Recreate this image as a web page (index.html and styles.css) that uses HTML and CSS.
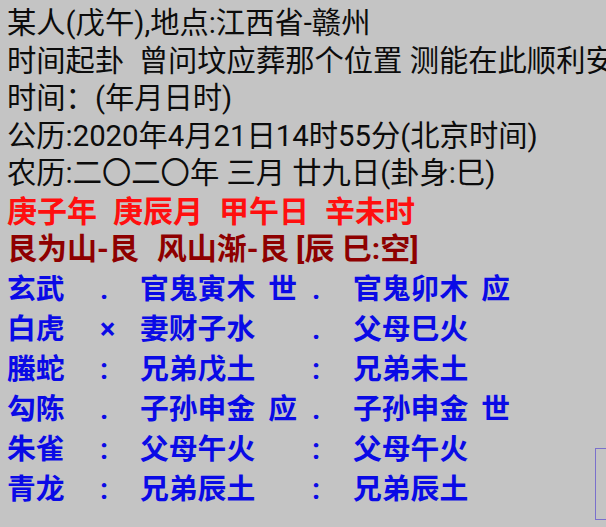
FILE: index.html
```html
<!DOCTYPE html>
<html lang="zh-CN">
<head>
<meta charset="utf-8">
<link rel="stylesheet" href="styles.css">
</head>
<body>
<div class="screen">
  <div class="info">
    <div class="line">某人(戊午),地点:江西省-赣州</div>
    <div class="line">时间起卦&nbsp;&nbsp;曾问坟应葬那个位置 测能在此顺利安葬</div>
    <div class="line">时间：(年月日时)</div>
    <div class="line">公历:2020年4月21日14时55分(北京时间)</div>
    <div class="line">农历:二〇二〇年 三月 廿九日(卦身:巳)</div>
    <div class="line red"><span>庚子年</span><span>庚辰月</span><span>甲午日</span><span>辛未时</span></div>
    <div class="line darkred"><span>艮为山-艮</span><span>风山渐-艮 [辰 巳:空]</span></div>
  </div>
  <div class="yao">
    <span>玄武</span><span class="mark">.</span><span>官鬼寅木<span class="shi">世</span></span><span class="mark">.</span><span>官鬼卯木<span class="shi">应</span></span>
    <span>白虎</span><span class="mark">×</span><span>妻财子水</span><span class="mark">.</span><span>父母巳火</span>
    <span>螣蛇</span><span class="mark">:</span><span>兄弟戊土</span><span class="mark">:</span><span>兄弟未土</span>
    <span>勾陈</span><span class="mark">.</span><span>子孙申金<span class="shi">应</span></span><span class="mark">.</span><span>子孙申金<span class="shi">世</span></span>
    <span>朱雀</span><span class="mark">:</span><span>父母午火</span><span class="mark">:</span><span>父母午火</span>
    <span>青龙</span><span class="mark">:</span><span>兄弟辰土</span><span class="mark">:</span><span>兄弟辰土</span>
  </div>
  <div class="corner-box"></div>
</div>
</body>
</html>
```

FILE: styles.css
```css
html, body {
  margin: 0;
  padding: 0;
  background: #c4c4c4;
}
body {
  width: 606px;
  height: 527px;
  overflow: hidden;
}
.screen {
  position: relative;
  width: 606px;
  height: 527px;
  overflow: hidden;
  font-family: Roboto, "Noto Sans CJK SC", sans-serif;
  font-size: 29.3px;
  color: #0c0c0c;
}
.info {
  padding-top: 5px;
  padding-left: 7px;
}
.line {
  line-height: 37.5px;
  height: 37.5px;
  white-space: nowrap;
}
.red {
  display: flex;
  gap: 16px;
  font-size: 30px;
  color: #ff0f0f;
  font-weight: bold;
}
.darkred {
  display: flex;
  gap: 18px;
  font-size: 30px;
  color: #8e0000;
  font-weight: bold;
}
.yao {
  margin-top: 1px;
  padding-left: 7px;
  display: grid;
  grid-template-columns: 93px 40px 172px 41px auto;
  grid-auto-rows: 40px;
  line-height: 40px;
  font-size: 28.8px;
  font-weight: bold;
  color: #0a0ae6;
  white-space: nowrap;
}
.shi {
  margin-left: 13px;
}
.corner-box {
  position: absolute;
  left: 595px;
  top: 448px;
  width: 20px;
  height: 70px;
  border: 1px solid #7a70cc;
}
```
